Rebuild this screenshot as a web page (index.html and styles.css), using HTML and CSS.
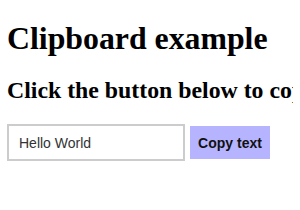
FILE: index.html
```html
<!DOCTYPE html>
<html lang="en">
<head>
  <meta charset="UTF-8">
  <title>Clipboard example</title>
  <link rel="stylesheet" href="styles.css">
</head>
<body>
  <h1>Clipboard example</h1>
  <h2 class="hint">Click the button below to copy the text</h2>
  <div class="copy-row">
    <input type="text" id="copyInput" class="copy-input" value="Hello World">
    <button id="copyBtn" class="copy-btn">Copy text</button>
  </div>

  <script>
    const copyBtn = document.getElementById('copyBtn');
    const copyInput = document.getElementById('copyInput');

    // Copy the input value to the clipboard
    copyBtn.addEventListener('click', () => {
      copyInput.select();
      document.execCommand('copy');
    });
  </script>
</body>
</html>
```

FILE: styles.css
```css
html {
  overflow: hidden;
}
body {
  font-family: "Liberation Serif", "Times New Roman", serif;
  margin: 0 7px;
}
h1 {
  font-size: 31.8px;
  margin: 21px 0 20px;
}
.hint {
  font-size: 23.8px;
  white-space: nowrap;
  margin: 20px 0;
}
.copy-row {
  display: flex;
  align-items: center;
  gap: 5px;
  margin-top: 19px;
}
.copy-input {
  box-sizing: border-box;
  width: 178px;
  height: 37px;
  margin: 0;
  padding: 0 10px;
  border: 2px solid #cccccc;
  font-family: "Liberation Sans", Arial, sans-serif;
  font-size: 14px;
  color: #333;
  outline: none;
}
.copy-btn {
  box-sizing: border-box;
  width: 80px;
  height: 33px;
  margin: 0;
  border: none;
  background-color: #b6b3ff;
  font-family: "Liberation Sans", Arial, sans-serif;
  font-size: 14px;
  font-weight: bold;
  color: #111;
  cursor: pointer;
}
```
